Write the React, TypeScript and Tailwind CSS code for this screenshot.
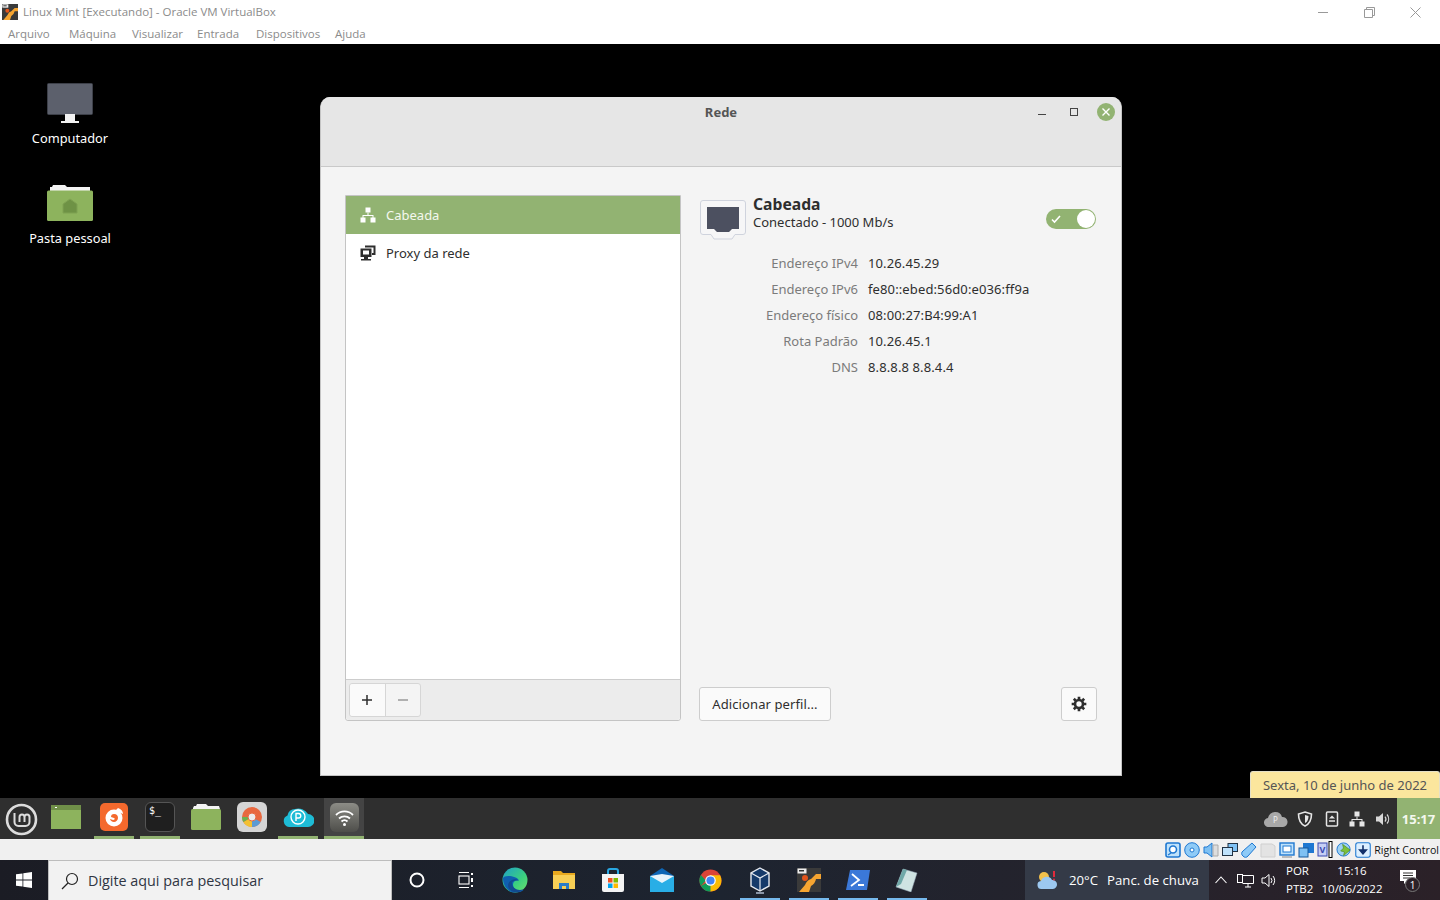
import React from "react";

const ubuntu = "font-['Noto_Sans','Open_Sans',sans-serif]";

function AppIcon({ s = 16 }: { s?: number }) {
  return (
    <svg width={s} height={s} viewBox="0 0 24 24">
      <rect width="24" height="24" fill="#3a3a3a" />
      <path d="M2 24 L8 17 Q10 12 14 11 L19 6 L24 6 L24 11 L19 11 Q18 16 14 18 L12 24 Z" fill="#f6a531" />
      <circle cx="8" cy="10" r="3" fill="#e2541c" />
      <rect x="0.5" y="0.5" width="9" height="5" fill="#eee" />
      <rect x="2" y="2" width="5" height="1.5" fill="#333" />
    </svg>
  );
}

function TitleBar() {
  const menu: [string, string][] = [
    ["Arquivo", "w-[61px]"],
    ["Máquina", "w-[63px]"],
    ["Visualizar", "w-[65px]"],
    ["Entrada", "w-[59px]"],
    ["Dispositivos", "w-[79px]"],
    ["Ajuda", "w-[50px]"],
  ];
  return (
    <div className="h-[44px] bg-white shrink-0 font-['Open_Sans',sans-serif] text-[11.5px] text-[#8b8b8b]">
      <div className="h-[24px] flex items-center pl-[2px]">
        <AppIcon />
        <span className="ml-[5px] whitespace-nowrap">Linux Mint [Executando] - Oracle VM VirtualBox</span>
        <div className="ml-auto flex items-center">
          <div className="w-[45px] flex justify-center">
            <svg width="11" height="11" viewBox="0 0 11 11"><path d="M0 5.5h10" stroke="#999" /></svg>
          </div>
          <div className="w-[46px] flex justify-center">
            <svg width="11" height="11" viewBox="0 0 11 11" fill="none" stroke="#999"><path d="M.5 2.5h8v8h-8zM2.500 2.500v-2h8v8h-2" /></svg>
          </div>
          <div className="w-[46px] flex justify-center mr-[2px]">
            <svg width="11" height="11" viewBox="0 0 11 11" stroke="#999"><path d="M.5.5l10 10M10.5.5l-10 10" /></svg>
          </div>
        </div>
      </div>
      <div className="h-[20px] flex items-center pl-[8px]">
        {menu.map(([m, w]) => (
          <span key={m} className={`${w} whitespace-nowrap`}>{m}</span>
        ))}
      </div>
    </div>
  );
}

function DesktopIcons() {
  return (
    <>
      <div className={`absolute left-[20px] top-[39px] w-[100px] flex flex-col items-center text-white text-[12.8px] ${ubuntu}`}>
        <svg width="46" height="41" viewBox="0 0 46 41">
          <rect x="0.5" y="0.5" width="45" height="31" rx="1" fill="#5c606c" stroke="#3d4049" />
          <rect x="18" y="31" width="10" height="7" fill="#f2f2f2" />
          <rect x="14" y="38" width="18" height="2" fill="#f2f2f2" />
        </svg>
        <span className="mt-[5px] leading-[18px]">Computador</span>
      </div>
      <div className={`absolute left-[20px] top-[140px] w-[100px] flex flex-col items-center text-white text-[12.8px] ${ubuntu}`}>
        <svg width="46" height="38" viewBox="0 0 46 38">
          <path d="M3 7V3h2l1-2h12l2 2h23v4z" fill="#f4f4f4" />
          <rect y="6.500" width="46" height="30.500" rx="1.500" fill="#8db35d" />
          <path d="M23 15l7 5v9H16v-9z" fill="#6e9245" stroke="#7fa253" />
        </svg>
        <span className="mt-[7px] leading-[18px]">Pasta pessoal</span>
      </div>
    </>
  );
}

function NetIcon({ color }: { color: string }) {
  return (
    <svg width="16" height="16" viewBox="0 0 16 16" fill={color}>
      <rect x="5.5" y="0.5" width="5" height="5" />
      <rect x="0.5" y="10.5" width="5" height="5" />
      <rect x="10.5" y="10.5" width="5" height="5" />
      <path d="M7.5 5.5h1V8h5v3h-1V9h-9v2h-1V8h5z" />
    </svg>
  );
}

function ProxyIcon() {
  return (
    <svg width="16" height="16" viewBox="0 0 16 16">
      <path d="M6 2.500V1.500h8.500V9H12" fill="none" stroke="#2e2e2e" strokeWidth="2" />
      <rect x="0.500" y="3.500" width="11" height="8.500" fill="#2e2e2e" />
      <rect x="3" y="5.500" width="6" height="4" fill="#fff" />
      <rect x="4" y="12" width="4" height="2" fill="#2e2e2e" />
      <rect x="1" y="14" width="10" height="1.500" fill="#2e2e2e" />
    </svg>
  );
}

function WiredBig() {
  return (
    <svg width="46" height="40" viewBox="0 0 46 40">
      <path d="M3 .5h40a2.5 2.5 0 0 1 2.5 2.5v29a2.5 2.5 0 0 1-2.5 2.5h-8l-3 4.500H14l-3-4.500H3A2.5 2.5 0 0 1 .5 32V3A2.5 2.5 0 0 1 3 .5z" fill="#f6f6f7" stroke="#cfd3dd" />
      <path d="M7 7h32v22h-7l-3 3H17l-3-3H7z" fill="#4c5060" />
    </svg>
  );
}

function NetworkWindow() {
  const rows = [
    ["Endereço IPv4", "10.26.45.29"],
    ["Endereço IPv6", "fe80::ebed:56d0:e036:ff9a"],
    ["Endereço físico", "08:00:27:B4:99:A1"],
    ["Rota Padrão", "10.26.45.1"],
    ["DNS", "8.8.8.8 8.8.4.4"],
  ];
  return (
    <div className={`absolute left-[320px] top-[53px] w-[802px] h-[679px] bg-[#f4f4f4] rounded-t-[10px] border-x border-b border-[#c4c4c4] flex flex-col overflow-hidden ${ubuntu} text-[13px] text-[#2e2e2e]`}>
      <div className="relative h-[70px] shrink-0 bg-[#e6e6e6] border-b border-[#c9c9c9]">
        <div className="pt-[6px] text-center font-bold text-[#555] leading-[18px]">Rede</div>
        <div className="absolute top-[6px] right-[6px] flex items-center">
          <svg width="18" height="18" viewBox="0 0 18 18" className="mr-[14px]"><path d="M5 11.500h8" stroke="#444" strokeWidth="1" /></svg>
          <svg width="18" height="18" viewBox="0 0 18 18" className="mr-[14px]"><rect x="5.5" y="5.500" width="7" height="7" fill="none" stroke="#444" /></svg>
          <svg width="18" height="18" viewBox="0 0 18 18">
            <circle cx="9" cy="9" r="9" fill="#92b372" />
            <path d="M5.5 5.5l7 7M12.5 5.500l-7 7" stroke="#fff" strokeWidth="1.400" />
          </svg>
        </div>
      </div>

      <div className="flex-1 flex pl-[24px] pr-[24px] pt-[28px] pb-[54px] gap-[18px]">
        <div className="w-[336px] flex flex-col bg-white border border-[#c4c4c4] rounded-b-[3px]">
          <div className="h-[38px] bg-[#92b372] flex items-center pl-[14px] gap-[10px] text-[#f4f8ee]">
            <NetIcon color="#fff" />
            <span className="mt-[2px]">Cabeada</span>
          </div>
          <div className="h-[38px] flex items-center pl-[14px] gap-[10px]">
            <ProxyIcon />
            <span className="mt-[2px]">Proxy da rede</span>
          </div>
          <div className="flex-1" />
          <div className="h-[41px] bg-[#ececec] border-t border-[#cdcdcd] rounded-b-[3px] pl-[3px] pt-[3px]">
            <div className="flex w-[72px] h-[34px] border border-[#d6d6d6] rounded-[3px] bg-[#f4f4f4]">
              <div className="w-[36px] flex items-center justify-center pr-[2px] bg-[#fafafa] border-r border-[#d6d6d6] rounded-l-[3px]">
                <svg width="12" height="12" viewBox="0 0 12 12"><path d="M6 1v10M1 6h10" stroke="#2e2e2e" strokeWidth="1.500" /></svg>
              </div>
              <div className="flex-1 flex items-center justify-center">
                <svg width="12" height="12" viewBox="0 0 12 12"><path d="M1 6h10" stroke="#9a9a9a" strokeWidth="1.500" /></svg>
              </div>
            </div>
          </div>
        </div>

        <div className="flex-1 flex flex-col">
          <div className="flex items-start">
            <div className="ml-px mt-[5px]"><WiredBig /></div>
            <div className="ml-[7px] flex flex-col">
              <span className="text-[15.7px] font-bold leading-[18px]">Cabeada</span>
              <span className="leading-[18px]">Conectado - 1000 Mb/s</span>
            </div>
            <div className="ml-auto mr-px mt-[14px] relative w-[50px] h-[20px] bg-[#92b372] rounded-full">
              <svg width="10" height="10" viewBox="0 0 10 10" className="absolute left-[5px] top-[5px]"><path d="M1 5.500l2.500 2.500L9 2" fill="none" stroke="#fff" strokeWidth="1.600" /></svg>
              <div className="absolute right-px top-px w-[18px] h-[18px] rounded-full bg-white" />
            </div>
          </div>
          <div className="mt-[11px] flex flex-col">
            {rows.map(([k, v]) => (
              <div key={k} className="flex h-[26px] items-center">
                <span className="w-[159px] text-right text-[#7b7b7b]">{k}</span>
                <span className="ml-[10px] tracking-[0.12px]">{v}</span>
              </div>
            ))}
          </div>
          <div className="mt-auto flex items-end justify-between">
            <div className="w-[132px] h-[34px] pt-px bg-[#fafafa] border border-[#cdcdcd] rounded-[3px] flex items-center justify-center tracking-[0.1px]">
              Adicionar perfil...
            </div>
            <div className="w-[36px] h-[34px] bg-[#fafafa] border border-[#cdcdcd] rounded-[3px] flex items-center justify-center">
              <svg width="16" height="16" viewBox="0 0 24 24" fill="none" stroke="#2e2e2e" strokeWidth="4">
                <circle cx="12" cy="12" r="6" />
                <path d="M12 1v4M12 19v4M1 12h4M19 12h4M4.200 4.200l2.800 2.800M17 17l2.800 2.800M4.200 19.800L7 17M17 7l2.800-2.800" strokeWidth="4" />
              </svg>
            </div>
          </div>
        </div>
      </div>
    </div>
  );
}

function MintPanel() {
  const slot = "w-[40px] h-[41px] flex items-center justify-center border-b-[3px] shrink-0";
  return (
    <div className={`h-[41px] shrink-0 bg-[#2f2f2f] flex items-stretch ${ubuntu}`}>
      <div className="w-[43px] pt-px flex items-center justify-center shrink-0">
        <svg width="33" height="33" viewBox="0 0 33 33" fill="none" stroke="#dcdcdc">
          <circle cx="16.500" cy="16.500" r="14.500" strokeWidth="2.600" />
          <path d="M9.500 10v9a4 4 0 0 0 4 4h7a4 4 0 0 0 4-4v-5a2.500 2.500 0 0 0-5 0v5m0-5a2.500 2.500 0 0 0-5 0v5" strokeWidth="2" />
        </svg>
      </div>
      <div className="ml-[3px] flex gap-[8px]">
        <div className={`${slot} border-transparent`}>
          <svg width="30" height="24" viewBox="0 0 30 24">
            <rect width="30" height="24" fill="#8db35d" />
            <rect width="30" height="5" fill="#6f8f48" />
            <rect x="4" y="2" width="2" height="1" fill="#fff" />
          </svg>
        </div>
        <div className="flex gap-[6px]">
          <div className={`${slot} border-[#92b372]`}>
            <svg width="28" height="28" viewBox="0 0 28 28">
              <rect width="28" height="28" rx="5" fill="#f4692d" />
              <circle cx="14" cy="15" r="8.500" fill="#fff" />
              <path d="M14 11c3 0 4 2 4 4s-2 4-4 4-4-2-4-3l3 1c2 0 2-2 1-2l-3-1c0-2 1-3 3-3z" fill="#f4692d" />
              <path d="M18 5c3 1 5 3 5 6l-5-2-3-1z" fill="#fff" />
            </svg>
          </div>
          <div className={`${slot} border-[#92b372]`}>
            <div className="w-[30px] h-[30px] rounded-[6px] bg-[#1f1f1f] border border-[#555] text-white text-[10px] leading-[10px] font-['DejaVu_Sans_Mono',monospace] pl-[3px] pt-[3px]">$_</div>
          </div>
          <div className={`${slot} border-transparent`}>
            <svg width="30" height="28" viewBox="0 0 30 28">
              <path d="M2 5l1-2h2l1-2h9l2 2h11l1 3H2z" fill="#f4f4f4" />
              <rect y="6" width="30" height="21" rx="1.500" fill="#8db35d" />
            </svg>
          </div>
          <div className={`${slot} border-transparent`}>
            <svg width="30" height="30" viewBox="0 0 30 30">
              <rect width="30" height="30" rx="6" fill="#d5d5d5" />
              <circle cx="15" cy="15" r="10" fill="#e8683f" />
              <path d="M15 15L6.300 20A10 10 0 0 0 15 25z" fill="#f3c033" />
              <path d="M15 15v10a10 10 0 0 0 8.700-5z" fill="#5b9bd5" />
              <path d="M15 15L6.300 20A10 10 0 0 1 5 15z" fill="#6cb14f" />
              <circle cx="15" cy="15" r="4" fill="#ececec" stroke="#e8683f" />
            </svg>
          </div>
          <div className={`${slot} border-[#92b372]`}>
            <svg width="32" height="22" viewBox="0 0 32 22">
              <path d="M7 21A6 6 0 0 1 5.500 9.500 8 8 0 0 1 13 3a11 11 0 0 1 13 5 6.500 6.500 0 0 1 0 13z" fill="#1ebcd6" />
              <circle cx="16" cy="11" r="7" fill="none" stroke="#fff" strokeWidth="1.400" />
              <path d="M14 15V7.500h2.500a2 2 0 0 1 0 4.500H14" fill="none" stroke="#fff" strokeWidth="1.400" />
            </svg>
          </div>
          <div className={`${slot} border-[#92b372] bg-[#444]`}>
            <svg width="29" height="29" viewBox="0 0 29 29">
              <defs>
                <linearGradient id="wg" x1="0" y1="0" x2="0" y2="1">
                  <stop offset="0" stopColor="#8c8c86" />
                  <stop offset="1" stopColor="#4e4e4a" />
                </linearGradient>
              </defs>
              <rect width="29" height="29" rx="6" fill="url(#wg)" />
              <path d="M6 12a12 12 0 0 1 17 0M9 15.500a8 8 0 0 1 11 0M11.500 18.500a4.500 4.500 0 0 1 6 0" fill="none" stroke="#fff" strokeWidth="1.800" />
              <circle cx="14.500" cy="21.500" r="1.500" fill="#fff" />
            </svg>
          </div>
        </div>
      </div>
      <div className="ml-auto flex items-center">
        <svg width="24" height="16" viewBox="0 0 24 16" className="mr-[9px]">
          <path d="M5 16a4.500 4.500 0 0 1-1-9A7 7 0 0 1 11 1a7 7 0 0 1 7 5 5 5 0 0 1 1 10z" fill="#a8a8a8" />
          <text x="9" y="12" fontSize="8" fill="#eee" fontFamily="Noto Sans">P</text>
        </svg>
        <svg width="16" height="16" viewBox="0 0 16 16" className="mr-[12px]" fill="none" stroke="#e6e6e6" strokeWidth="1.600">
          <path d="M8 1l6.500 2c0 6-2 10-6.500 12C3.500 13 1.500 9 1.500 3z" />
          <path d="M8 4l3.500 1c0 3-1 6-3.500 7z" fill="#e6e6e6" stroke="none" />
        </svg>
        <svg width="14" height="16" viewBox="0 0 14 16" className="mr-[10px]" fill="none" stroke="#e6e6e6" strokeWidth="1.500">
          <rect x="1.500" y="1" width="11" height="14" rx="1" />
          <path d="M7 4.500l3 3H4z" fill="#e6e6e6" stroke="none" />
          <path d="M4 10h6" />
        </svg>
        <div className="mr-[10px]"><NetIcon color="#e6e6e6" /></div>
        <svg width="16" height="16" viewBox="0 0 16 16" className="mr-[6px]" fill="none" stroke="#d8d8d8" strokeWidth="1.200">
          <path d="M1 5.500h3l4-3.500v12l-4-3.500H1z" fill="#d8d8d8" stroke="none" />
          <path d="M10 5.500a4 4 0 0 1 0 5M12 3.500a7 7 0 0 1 0 9" />
        </svg>
        <div className="w-[43px] pt-[2px] self-stretch bg-[#92b372] flex items-center justify-center text-[13px] font-bold text-[#f4f8ee]">15:17</div>
      </div>
    </div>
  );
}

function StatusBar() {
  const b = "#1f78d1";
  return (
    <div className="h-[21px] shrink-0 bg-[#f0f0f0] flex items-center justify-end pr-[1px] font-['Open_Sans',sans-serif] text-[10.6px] text-[#111]">
      <div className="flex items-center gap-[3px] mr-[2px]">
        <svg width="16" height="16" viewBox="0 0 16 16"><rect x="1" y="1" width="14" height="14" rx="2" fill="#bfe2fb" stroke={b} strokeWidth="1.600" /><circle cx="8" cy="7.500" r="3.500" fill="#fff" stroke={b} strokeWidth="1.600" /><path d="M3 13l3-2" stroke={b} strokeWidth="1.400" /></svg>
        <svg width="16" height="16" viewBox="0 0 16 16"><circle cx="8" cy="8" r="7.300" fill="#8fcbf7" stroke={b} /><circle cx="8" cy="8" r="2" fill="#fff" stroke={b} /></svg>
        <svg width="16" height="16" viewBox="0 0 16 16"><path d="M1 5h3l5-4v14l-5-4H1z" fill="#7fc1f3" stroke={b} /><path d="M10 3h5v11h-5z" fill="#ddd" stroke="#aaa" /></svg>
        <svg width="16" height="16" viewBox="0 0 16 16"><rect x="6" y="1.500" width="9.500" height="8" fill="#7fc1f3" stroke="#234" /><rect x="0.500" y="5.500" width="10" height="8" fill="#bfe2fb" stroke="#234" /></svg>
        <svg width="16" height="16" viewBox="0 0 16 16"><path d="M11 1l4 4-8 9a3 3 0 0 1-5 0 3 3 0 0 1 0-5z" fill="#8fcbf7" stroke={b} /></svg>
        <svg width="16" height="16" viewBox="0 0 16 16"><path d="M1 2h11l3 2v11H1z" fill="#e3e3e3" stroke="#cfcfcf" /></svg>
        <svg width="16" height="16" viewBox="0 0 16 16"><rect x="1" y="1" width="14" height="12" fill="#bfe2fb" stroke={b} strokeWidth="1.400" /><rect x="4" y="4" width="8" height="6" fill="#fff" stroke={b} /><path d="M3 15h10" stroke="#888" /></svg>
        <svg width="16" height="16" viewBox="0 0 16 16"><rect x="5" y="1" width="11" height="10" fill="#1f78d1" /><rect x="1" y="6" width="9" height="9" fill="#7fc1f3" stroke="#17599b" /></svg>
        <svg width="16" height="17" viewBox="0 0 16 17"><rect x="1" y="2" width="9" height="13" fill="#c6cff5" stroke="#3848b0" /><text x="2.500" y="12" fontSize="9" fontWeight="700" fill="#3848b0" fontFamily="Open Sans">V</text><rect x="12" y="0.500" width="3" height="16" fill="#fff" stroke="#000" /></svg>
        <svg width="16" height="17" viewBox="0 0 17 17"><circle cx="8" cy="8.500" r="7" fill="#9fd1f2" stroke={b} /><path d="M7 3l8 6-7 6 1-4-4-1 3-3z" fill="#7cc13a" stroke="#4d8a1c" strokeWidth="0.700" /></svg>
        <svg width="16" height="16" viewBox="0 0 15 15"><rect x="0.700" y="0.700" width="13.600" height="13.600" rx="2" fill="#dcefff" stroke={b} /><path d="M7.500 3v5M4.500 7.500h6L7.500 11z" stroke="#12306a" fill="#12306a" strokeWidth="1.500" /></svg>
      </div>
      <span className="whitespace-nowrap mt-[2px] ml-px">Right Control</span>
    </div>
  );
}

function WinTaskbar() {
  const cell = "w-[49px] flex items-center justify-center shrink-0";
  const active = "w-[49px] flex items-center justify-center shrink-0 relative";
  const bar = <div className="absolute bottom-0 left-[5px] right-[4px] h-[2px] bg-[#76b9ed]" />;
  return (
    <div className="h-[40px] shrink-0 flex bg-linear-to-r from-[#1b1c24] via-[#1d2430] to-[#2b2128] text-white font-['Open_Sans',sans-serif]">
      <div className="w-[48px] flex items-center justify-center shrink-0">
        <svg width="16" height="16" viewBox="0 0 16 16" fill="#fff"><path d="M0 2.300l6.500-.9v6.200H0zM7.300 1.300L16 0v7.600H7.300zM0 8.400h6.500v6.200L0 13.700zM7.300 8.400H16V16l-8.700-1.200z" /></svg>
      </div>
      <div className="w-[344px] bg-[#f2f2f2] border-t border-x border-[#bdbdbd] flex items-center pl-[12px] text-[14.35px] text-[#2f3542] shrink-0">
        <svg width="18" height="18" viewBox="0 0 18 18" fill="none" stroke="#222" strokeWidth="1.200"><circle cx="11" cy="7" r="5.500" /><path d="M7 11l-6 6" /></svg>
        <span className="ml-[9px] whitespace-nowrap">Digite aqui para pesquisar</span>
      </div>
      <div className={cell}>
        <svg width="16" height="16" viewBox="0 0 16 16"><circle cx="8" cy="8" r="6.500" fill="none" stroke="#fff" strokeWidth="2" /></svg>
      </div>
      <div className={cell}>
        <svg width="16" height="16" viewBox="0 0 16 16" fill="none" stroke="#fff" strokeWidth="1.100"><path d="M1 .5h10M1 15.500h10" /><rect x="1" y="4" width="10" height="8" /><rect x="13" y="1" width="2" height="2" fill="#fff" stroke="none" /><rect x="13" y="6" width="2" height="4" fill="#fff" stroke="none" /><rect x="13" y="13" width="2" height="2" fill="#fff" stroke="none" /></svg>
      </div>
      <div className={cell}>
        <svg width="26" height="26" viewBox="0 0 26 26">
          <defs>
            <linearGradient id="eg" x1="0" y1="0" x2="1" y2="1">
              <stop offset="0" stopColor="#1f9fc9" />
              <stop offset="0.600" stopColor="#3bd07f" />
              <stop offset="1" stopColor="#6fe06a" />
            </linearGradient>
          </defs>
          <circle cx="13" cy="13" r="12.500" fill="url(#eg)" />
          <path d="M1 11C1 20 7 26 14 25.500c4 0 6-1 8-3-5 2-11 0-11-5 0-3 3-5 6-4-2-5-15-6-16-2.500z" fill="#0f5fb0" />
          <path d="M10 16c0 5 5 8 11 6.500-3 3-9 3.500-12 1C5 21 5 15 10 13c2-1 5-1 7 1-4-1-7 0-7 2z" fill="#124a8f" />
        </svg>
      </div>
      <div className={cell}>
        <svg width="22" height="20" viewBox="0 0 22 20">
          <path d="M0 1h8l2 2h12v15H0z" fill="#e8a91e" />
          <rect y="5" width="22" height="14" fill="#f7cf55" />
          <path d="M6 19v-6h10v6h-3v-3H9v3z" fill="#2a7cc7" />
        </svg>
      </div>
      <div className={cell}>
        <svg width="24" height="25" viewBox="0 0 24 25">
          <path d="M7 7V3a2 2 0 0 1 2-2h6a2 2 0 0 1 2 2v4" fill="none" stroke="#29a7e2" strokeWidth="2" />
          <path d="M1 6h22v16a2 2 0 0 1-2 2H3a2 2 0 0 1-2-2z" fill="#f4f4f4" />
          <rect x="7" y="10" width="4.500" height="4.500" fill="#f25022" />
          <rect x="12.500" y="10" width="4.500" height="4.500" fill="#7fba00" />
          <rect x="7" y="15.500" width="4.500" height="4.500" fill="#00a4ef" />
          <rect x="12.500" y="15.500" width="4.500" height="4.500" fill="#ffb900" />
        </svg>
      </div>
      <div className={cell}>
        <svg width="24" height="24" viewBox="0 0 24 24">
          <path d="M12 0L0 8v16h24V8z" fill="#0e66b5" />
          <rect y="8" width="24" height="16" fill="#29aee6" />
          <path d="M0 8l12 7 12-7-12-2z" fill="#e8f4fb" />
        </svg>
      </div>
      <div className={cell}>
        <svg width="23" height="23" viewBox="0 0 48 48">
          <circle cx="24" cy="24" r="23" fill="#db4437" />
          <path d="M24 24L4 35.500A23 23 0 0 0 24 47l11.500-20z" fill="#0f9d58" />
          <path d="M24 47a23 23 0 0 0 20-34H24z" fill="#fbbc04" />
          <path d="M4 35.500A23 23 0 0 1 4 12.500L14 24z" fill="#0f9d58" />
          <circle cx="24" cy="24" r="11" fill="#fff" />
          <circle cx="24" cy="24" r="8.500" fill="#4285f4" />
        </svg>
      </div>
      <div className={active}>
        <svg width="22" height="27" viewBox="0 0 22 27">
          <path d="M11 1l9 5v13l-9 5-9-5V6z" fill="#153a6a" stroke="#e6eaf0" strokeWidth="1.400" />
          <path d="M2 6l9 5 9-5M11 11v13" fill="none" stroke="#e6eaf0" strokeWidth="1.200" />
          <path d="M7 25h8v2H7z" fill="#8a96a8" />
        </svg>
        {bar}
      </div>
      <div className={active}>
        <AppIcon s={24} />
        {bar}
      </div>
      <div className={active}>
        <svg width="24" height="20" viewBox="0 0 24 20">
          <path d="M4 0h20l-3 20H0z" fill="#3b78d8" />
          <path d="M6 4l7 6-8 6M12 15h6" fill="none" stroke="#fff" strokeWidth="1.800" />
        </svg>
        {bar}
      </div>
      <div className={active}>
        <svg width="23" height="24" viewBox="0 0 23 24">
          <path d="M8 1l14 4-6 19-15-5z" fill="#cfe3e2" stroke="#9ab" strokeWidth="0.500" />
          <path d="M8 1l4 1-6 14-5 3z" fill="#6fa8a8" />
        </svg>
        {bar}
      </div>
      <div className="flex-1" />
      <div className="w-[184px] bg-[#343a47] flex items-center pl-[12px] text-[13.2px] shrink-0">
        <svg width="22" height="20" viewBox="0 0 22 20">
          <circle cx="7" cy="7" r="5" fill="#f3c14b" />
          <path d="M5 19a4 4 0 0 1-1-8 6 6 0 0 1 11-1 4.500 4.500 0 0 1 1 9z" fill="#9cc8f0" />
          <path d="M17 1v6" stroke="#e22a3c" strokeWidth="2" />
          <circle cx="17" cy="9.500" r="1" fill="#e22a3c" />
        </svg>
        <span className="ml-[10px] mt-px whitespace-nowrap">20°C</span>
        <span className="ml-[9px] mt-px whitespace-nowrap">Panc. de chuva</span>
      </div>
      <div className="w-[231px] flex items-center shrink-0 relative text-[11.5px]">
        <svg width="12" height="8" viewBox="0 0 12 8" className="ml-[6px]" fill="none" stroke="#fff" strokeWidth="1.100"><path d="M.5 7L6 1l5.500 6" /></svg>
        <svg width="17" height="15" viewBox="0 0 17 15" className="ml-[10px]" fill="none" stroke="#fff"><rect x="0.500" y="1.500" width="5" height="8" /><path d="M5.500 2.500h11v8h-11M8 14h6M11 10.500V14" /></svg>
        <svg width="16" height="15" viewBox="0 0 16 15" className="ml-[7px]" fill="none" stroke="#fff"><path d="M1 5h3l4-3.500v12L4 10H1zM10 5a4 4 0 0 1 0 5M12 3a7 7 0 0 1 0 9" /></svg>
        <div className="ml-[9px] w-[28px] flex flex-col leading-[18px]">
          <span>POR</span>
          <span>PTB2</span>
        </div>
        <div className="ml-[8px] w-[60px] flex flex-col items-center leading-[18px]">
          <span>15:16</span>
          <span>10/06/2022</span>
        </div>
        <div className="ml-[18px] relative w-[20px] h-[20px]">
          <svg width="16" height="15" viewBox="0 0 16 15" fill="#fff"><path d="M0 0h16v11H7l-3 3v-3H0z" /><path d="M3 3h10M3 5.500h10M3 8h7" stroke="#333" /></svg>
          <div className="absolute left-[5px] top-[7px] w-[15px] h-[15px] rounded-full bg-[#2b2128] border border-[#777] flex items-center justify-center text-[10px] leading-none">1</div>
        </div>
      </div>
    </div>
  );
}

export default function App() {
  return (
    <div className="w-[1440px] h-[900px] flex flex-col overflow-hidden relative">
      <TitleBar />
      <div className="relative flex-1 bg-black">
        <DesktopIcons />
        <NetworkWindow />
        <div className={`absolute right-0 bottom-0 w-[190px] h-[27px] pt-px bg-[#fbe69d] border border-[#e5e0c8] border-b-0 rounded-t-[3px] flex items-center justify-center text-[13px] text-[#555] whitespace-nowrap ${ubuntu}`}>
          Sexta, 10 de junho de 2022
        </div>
      </div>
      <MintPanel />
      <StatusBar />
      <WinTaskbar />
    </div>
  );
}
